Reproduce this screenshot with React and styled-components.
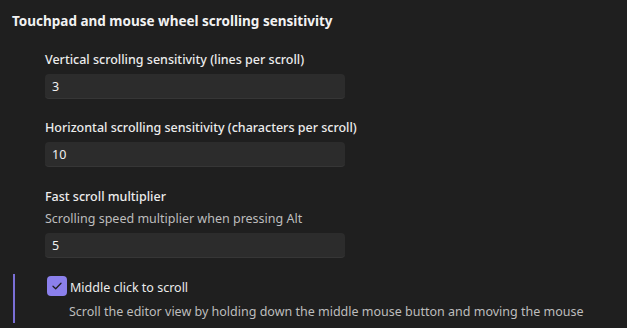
import React from 'react';
import styled, { createGlobalStyle } from 'styled-components';

const GlobalStyle = createGlobalStyle`
  html, body {
    margin: 0;
    padding: 0;
    background: #1f1f1f;
  }
  body {
    font-family: "Noto Sans", "Open Sans", sans-serif;
    color: #e6e6e6;
  }
`;

const Page = styled.div`
  width: 627px;
  height: 328px;
  overflow: hidden;
  background: #1f1f1f;
  padding: 11px 0 0 12px;
  box-sizing: border-box;
`;

const Title = styled.h2`
  margin: 0;
  font-size: 13.5px;
  font-weight: 700;
  line-height: 20px;
  color: #f2f2f2;
`;

const Group = styled.div`
  display: flex;
  flex-direction: column;
  padding-left: 33px;
  margin-top: ${({ $top }) => $top}px;
`;

const Label = styled.div`
  font-size: 12.5px;
  font-weight: 500;
  line-height: 18px;
  color: #ececec;
`;

const Desc = styled.div`
  font-size: 12.5px;
  line-height: 18px;
  color: #bdbdbd;
  margin-top: 4px;
`;

const Input = styled.input`
  box-sizing: border-box;
  width: 300px;
  height: 25px;
  margin-top: ${({ $top }) => $top || 5}px;
  padding: 0 7px;
  border: none;
  border-bottom: 1px solid #363636;
  border-radius: 4px;
  background: #2c2c2c;
  color: #f0f0f0;
  font-family: inherit;
  font-size: 12.5px;
  outline: none;
`;

const CheckSection = styled.div`
  display: flex;
  flex-direction: column;
  margin-top: 16px;
  margin-left: 1px;
  padding: 1px 0 2px 32px;
  border-left: 2px solid #7a6fd6;
`;

const CheckRow = styled.label`
  display: flex;
  align-items: center;
`;

const Box = styled.span`
  width: 20px;
  height: 20px;
  border-radius: 4px;
  background: #8b80ec;
  display: flex;
  align-items: center;
  justify-content: center;
  margin: 0 3px 2px 0;
`;

const CheckText = styled.span`
  font-size: 12.5px;
  line-height: 22px;
  color: #ececec;
  margin-top: 2px;
`;

const CheckDesc = styled.div`
  font-size: 12.5px;
  line-height: 18px;
  color: #bdbdbd;
  padding-left: 22px;
  margin-top: 4px;
`;

export default function App() {
  return (
    <Page>
      <GlobalStyle />
      <Title>Touchpad and mouse wheel scrolling sensitivity</Title>
      <Group $top={20}>
        <Label>Vertical scrolling sensitivity (lines per scroll)</Label>
        <Input defaultValue="3" />
      </Group>
      <Group $top={20}>
        <Label>Horizontal scrolling sensitivity (characters per scroll)</Label>
        <Input defaultValue="10" />
      </Group>
      <Group $top={21}>
        <Label>Fast scroll multiplier</Label>
        <Desc>Scrolling speed multiplier when pressing Alt</Desc>
        <Input defaultValue="5" $top={5} />
      </Group>
      <CheckSection>
        <CheckRow>
          <Box>
            <svg width="10" height="8" viewBox="0 0 10 8" fill="none">
              <path d="M1 4.2 L3.7 6.8 L9 1.2" stroke="#1f1f1f" strokeWidth="1.3" strokeLinecap="round" strokeLinejoin="round" />
            </svg>
          </Box>
          <CheckText>Middle click to scroll</CheckText>
        </CheckRow>
        <CheckDesc>Scroll the editor view by holding down the middle mouse button and moving the mouse</CheckDesc>
      </CheckSection>
    </Page>
  );
}
